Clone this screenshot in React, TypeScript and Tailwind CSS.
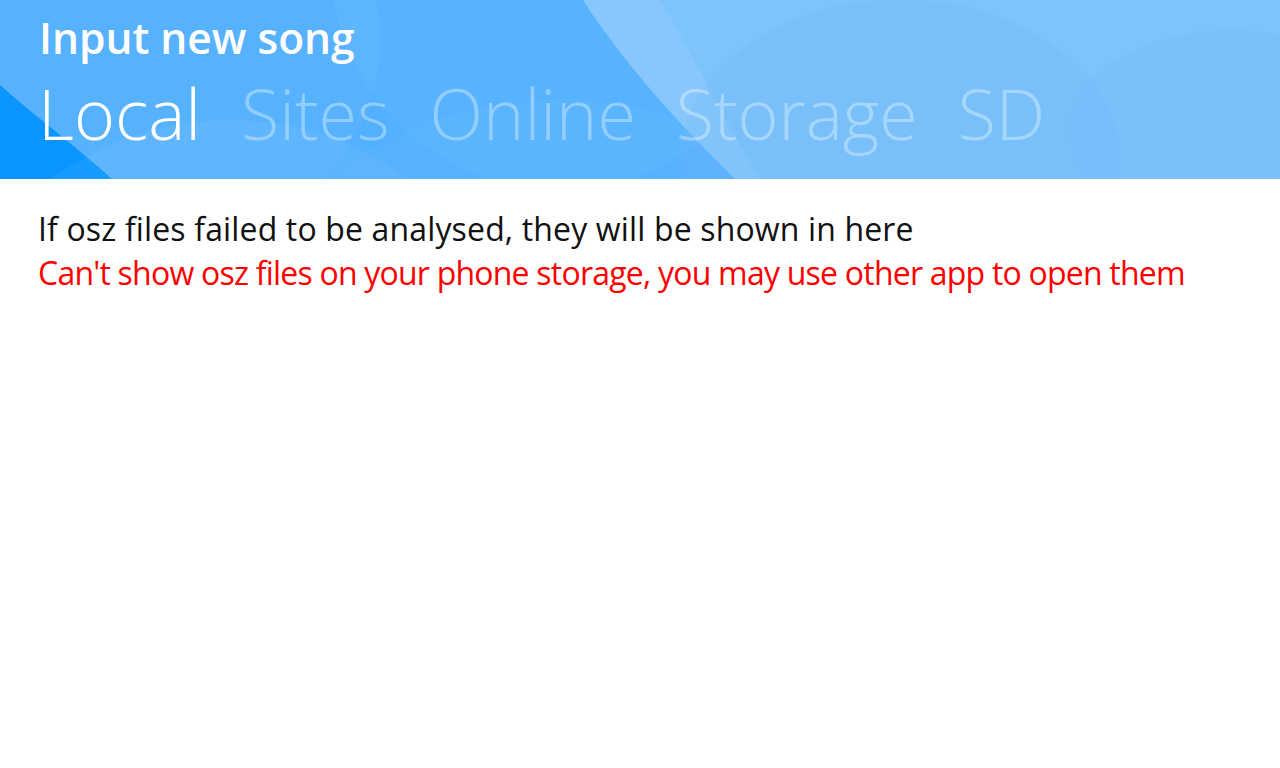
import React from "react";

export default function App() {
  const tabs = ["Local", "Sites", "Online", "Storage", "SD"];
  return (
    <div className="w-[1280px] h-[768px] bg-white" style={{ fontFamily: '"Open Sans", "Noto Sans", sans-serif' }}>
      <div className="relative h-[179px] overflow-hidden bg-[#52b0fe]">
        <svg className="absolute inset-0" width="1280" height="179" viewBox="0 0 1280 179">
          <circle cx="180" cy="40" r="200" fill="#ffffff" opacity="0.03" />
          <circle cx="560" cy="-40" r="230" fill="#ffffff" opacity="0.04" />
          <circle cx="560" cy="500" r="400" fill="#ffffff" opacity="0.025" />
          <path d="M0,85 C40,120 80,150 112,179 L0,179 Z" fill="#0a96fe" />
          <circle cx="230" cy="420" r="300" fill="#ffffff" opacity="0.05" />
          <path d="M583,0 C625,65 680,125 735,179 L1280,179 L1280,0 Z" fill="#7dc3fd" />
          <path d="M583,0 C625,65 680,125 735,179 L760,179 C720,110 690,50 660,0 Z" fill="#ffffff" opacity="0.08" />
          <ellipse cx="900" cy="160" rx="220" ry="160" fill="#6fb8f8" opacity="0.25" />
          <ellipse cx="1230" cy="130" rx="160" ry="100" fill="#6fb8f8" opacity="0.12" />
        </svg>
        <div className="relative flex flex-col pl-[38px] pt-[12px]">
          <div className="text-[42.5px] leading-[52px] font-semibold text-white pl-[1px]">Input new song</div>
          <div className="flex gap-[40px] mt-[4px]">
            {tabs.map((t, i) => (
              <span
                key={t}
                className={
                  "text-[70px] leading-[90px] font-light " +
                  (i === 0 ? "text-white" : "text-white/35")
                }
              >
                {t}
              </span>
            ))}
          </div>
        </div>
      </div>
      <div className="pl-[38px] pt-[28px]">
        <div className="text-[32px] leading-[44px] tracking-[0.15px] text-[#111111]">If osz files failed to be analysed, they will be shown in here</div>
        <div className="text-[32px] leading-[44px] tracking-[-0.78px] text-[#ff0000]">Can't show osz files on your phone storage, you may use other app to open them</div>
      </div>
    </div>
  );
}
